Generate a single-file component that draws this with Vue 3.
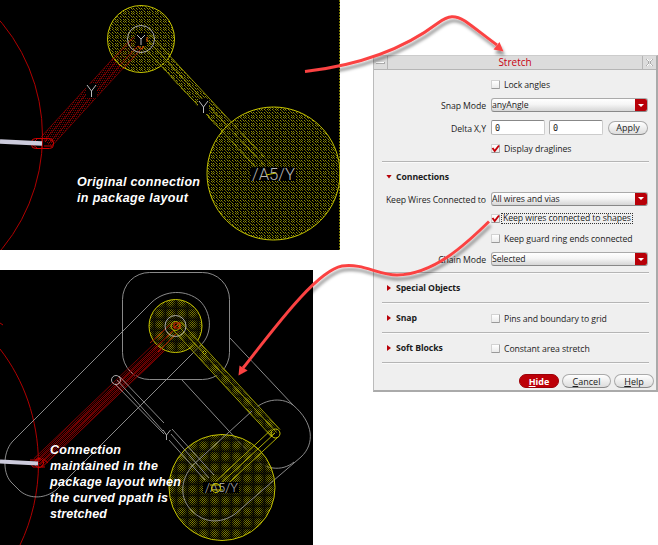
<script setup>
const sections = [
  { title: 'Special Objects', option: '' },
  { title: 'Snap', option: 'Pins and boundary to grid' },
  { title: 'Soft Blocks', option: 'Constant area stretch' },
]
</script>

<template>
  <main class="page">
    <div class="figures">
      <svg class="figure" width="340" height="250" viewBox="0 0 340 250">
        <defs>
          <pattern id="dotY" width="8" height="8" patternUnits="userSpaceOnUse">
            <path d="M0 0h1v1h-1zM3 0h1v1h-1zM5 0h1v1h-1zM0 3h1v1h-1zM3 3h1v1h-1zM5 3h1v1h-1zM0 5h1v1h-1zM3 5h1v1h-1zM5 5h1v1h-1z" fill="#8f8d00" />
            <path d="M1 1h1v1h-1zM4 1h1v1h-1zM6 1h1v1h-1zM1 4h1v1h-1zM4 4h1v1h-1zM6 4h1v1h-1zM1 6h1v1h-1zM4 6h1v1h-1zM6 6h1v1h-1zM7 2h1v1h-1zM2 7h1v1h-1z" fill="#625f00" />
          </pattern>
          <pattern id="dotR" width="4" height="4" patternUnits="userSpaceOnUse">
            <path d="M0 0h1v1h-1zM2 0h1v1h-1zM1 2h1v1h-1zM3 2h1v1h-1z" fill="#780000" />
          </pattern>
        </defs>
        <rect width="340" height="250" fill="#000" />
        <path d="M339.500 0V250" stroke="#777600" stroke-dasharray="2 1" />
        <circle cx="-135" cy="136" r="177.500" fill="none" stroke="#b00000" />
        <path d="M41 137L131 39L141 48L51 147Z" fill="url(#dotR)" />
        <g transform="translate(46 142) rotate(-47.500)">
          <path d="M0 -7H134M0 7H134M0 -2.500H134M0 3H134" stroke="#a90000" stroke-width=".6" fill="none" />
        </g>
        <circle cx="141" cy="39" r="33.500" fill="#000" fill-opacity=".6" />
        <circle cx="141" cy="39" r="33.500" fill="url(#dotY)" stroke="#c5c300" />
        <path d="M112 60L134 37M119 66L140 44M123 69L143 47" stroke="#ae1600" stroke-width=".8" />
        <path d="M151 35L273 168L263 177L141 45Z" fill="url(#dotY)" />
        <g transform="translate(146 40) rotate(47)">
          <path d="M-1 -6.500H178M0 -1H181M0 6.500H172" stroke="#a9a700" stroke-width=".8" fill="none" />
        </g>
        <circle cx="273.500" cy="173.500" r="66.500" fill="url(#dotY)" stroke="#c5c300" />
        <circle cx="141" cy="39" r="13.500" fill="none" stroke="#aaa" />
        <rect x="136" y="33" width="10" height="13" fill="#000" />
        <path d="M137 35l4 4 4-4M141 39v6" stroke="#bbb" fill="none" />
        <path d="M147 37v5M138 46l4 3 2-3" stroke="#e34b00" fill="none" />
        <rect x="86" y="84" width="11" height="14" fill="#000" />
        <path d="M87 85l4.500 6 4.500-6M91.500 91v6" stroke="#bbb" fill="none" />
        <rect x="198" y="99" width="11" height="15" fill="#000" />
        <path d="M199 101l4.500 6 4.500-6M203.500 107v6" stroke="#bbb" fill="none" />
        <rect x="251" y="167" width="45" height="14" fill="#000" />
        <text x="252" y="179.500" class="tag" textLength="43" lengthAdjust="spacingAndGlyphs">/A5/Y</text>
        <path d="M266 175l10-2" stroke="#c7c300" />
        <rect x="31.500" y="138.500" width="22" height="10" rx="4" fill="none" stroke="#d00000" />
        <path d="M37 139l-5 5 5 4M42 148V139M45 142l3-4 5 4M44 146h8" stroke="#c00000" fill="none" />
        <path d="M0 141.500L42 143.500" stroke="#cccbdc" stroke-width="4.500" />
        <text class="caption" x="77" y="186" textLength="123">Original connection</text>
        <text class="caption" x="77" y="202" textLength="111">in package layout</text>
      </svg>

      <svg class="figure" width="313" height="275" viewBox="0 270 313 275">
        <defs>
          <pattern id="finY" width="2" height="2" patternUnits="userSpaceOnUse">
            <path d="M0 0h1v1h-1zM1 1h1v1h-1z" fill="#8b8900" />
          </pattern>
          <radialGradient id="cell">
            <stop offset="0" stop-color="#000" stop-opacity="0" />
            <stop offset=".45" stop-color="#000" stop-opacity=".15" />
            <stop offset="1" stop-color="#000" stop-opacity=".68" />
          </radialGradient>
          <pattern id="shadeY" width="11" height="11" patternUnits="userSpaceOnUse">
            <rect width="11" height="11" fill="url(#cell)" />
            <path d="M0 .5H11M.5 0V11" stroke="#000" stroke-opacity=".4" />
          </pattern>
          <pattern id="finR" width="2" height="2" patternUnits="userSpaceOnUse">
            <path d="M0 0h1v1h-1zM1 1h1v1h-1z" fill="#700000" />
          </pattern>
        </defs>
        <rect y="270" width="313" height="275" fill="#000" />
        <path d="M0 323l3 2M0 349C24 380 38 419 38.500 463C38.500 492 32 520 20 545" fill="none" stroke="#b00000" />
        <g fill="none" stroke="#999" stroke-width=".9">
          <rect x="122.500" y="272.500" width="107" height="107" rx="27" />
          <path d="M152 302L14 440C3 450 2 472 11 482L20 491C31 500 46 498 56 490L200 346C214 333 211 312 200 301C186 289 165 290 152 302Z" />
          <path d="M230 338L293 405C314 423 315 444 301 457L273 481M182 380L252 456C264 470 282 472 294 462M252 411C263 400 280 396 293 405" />
        </g>
        <path d="M34 459L168 333L176 341L42 467Z" fill="url(#finR)" />
        <g transform="translate(38 463) rotate(-43.700)">
          <path d="M0 -6H184M0 6H184M0 -2H193M0 2H193" stroke="#a00000" fill="none" stroke-width=".7" />
        </g>
        <circle cx="175.500" cy="326" r="26.500" fill="url(#finY)" />
        <circle cx="175.500" cy="326" r="26.500" fill="url(#shadeY)" stroke="#c5c300" />
        <path d="M150 343L172 323M154 349L177 327M158 352L179 331" stroke="#9d1300" />
        <circle cx="222" cy="487.500" r="53" fill="url(#finY)" />
        <circle cx="222" cy="487.500" r="53" fill="url(#shadeY)" stroke="#c5c300" />
        <path d="M181 322L279 429L271 437L173 330Z" fill="url(#finY)" />
        <path d="M181 322L279 429L271 437L173 330Z" fill="url(#shadeY)" />
        <g transform="translate(177 326) rotate(47.300)">
          <path d="M0 -5.500H146M0 5.500H146M0 -1H146" stroke="#aaa900" fill="none" stroke-width=".8" />
        </g>
        <g transform="translate(275 433) rotate(137)">
          <path d="M0 -5H76M0 0H76M0 5H76" stroke="#b5b300" fill="none" stroke-width=".9" />
        </g>
        <circle cx="275.500" cy="433.500" r="4.500" fill="none" stroke="#c8c600" />
        <path d="M202.500 352.500l2-2 2 2-2 2z" fill="none" stroke="#c8c600" />
        <g fill="none" stroke="#999" stroke-width=".9">
          <path d="M119 376L164 423M115 384L164 434M117 380L163 431M172 429L214 475M169 440L205 480M171 434L209 478" />
          <circle cx="116" cy="380" r="4.500" stroke="#bbb" />
          <path d="M163 430l3.500 5 4-5M166.500 435v5" stroke="#bbb" />
          <path d="M193 465L252 411M193 465C180 480 179 498 192 511C203 522 219 525 235 514L273 481" />
          <circle cx="175.500" cy="326" r="10.500" stroke="#bbb" />
        </g>
        <circle cx="175.500" cy="326" r="4.500" fill="none" stroke="#b8b600" />
        <path d="M174 323h6v5h-6zM174 328l4-4" fill="none" stroke="#d01d00" />
        <rect x="203" y="482" width="36" height="11" fill="#000" />
        <text x="205" y="492" class="tag small" textLength="33" lengthAdjust="spacingAndGlyphs">/A5/Y</text>
        <circle cx="216" cy="488" r="4.500" fill="none" stroke="#c8c600" />
        <path d="M210 485h11M211 490h12" stroke="#b8b600" />
        <circle cx="39" cy="463" r="4.500" fill="none" stroke="#d00000" />
        <path d="M30 460h11M33 467h12M30 463l3 4M42 458l6 5" stroke="#c00000" fill="none" />
        <path d="M0 461.500L38 463.500" stroke="#cccbdc" stroke-width="3.800" />
        <text class="caption" x="50" y="454" textLength="71">Connection</text>
        <text class="caption" x="50" y="470" textLength="108">maintained in the</text>
        <text class="caption" x="50" y="486" textLength="131">package layout when</text>
        <text class="caption" x="50" y="502" textLength="118">the curved ppath is</text>
        <text class="caption" x="50" y="518" textLength="57">stretched</text>
      </svg>
    </div>

    <section class="dialog">
      <header class="titlebar">
        <span class="tb-btn"><i class="dash"></i></span>
        <span class="tb-title">Stretch</span>
        <span class="tb-btn right">
          <svg width="9" height="9" viewBox="0 0 9 9"><path d="M1 1l2.500 2v3L1 8M8 1L5.500 3v3L8 8" fill="none" stroke="#aaa" /><path d="M2 1l2 2M7 1L5 3M2 8l2-2M7 8L5 6" stroke="#fff" /></svg>
        </span>
      </header>

      <div class="body">
        <div class="row r-lock"><span class="label"></span><i class="check"></i><span class="opt">Lock angles</span></div>
        <div class="row r-snap"><span class="label">Snap Mode</span><div class="combo"><span>anyAngle</span><b></b></div></div>
        <div class="row r-delta">
          <span class="label">Delta X,Y</span>
          <span class="input">0</span><span class="input">0</span>
          <button class="btn apply">Apply</button>
        </div>
        <div class="row r-drag">
          <span class="label"></span>
          <i class="check"><svg width="9" height="9" viewBox="0 0 9 9"><path d="M1.500 4l2.200 3L8 1.500" fill="none" stroke="#c60008" stroke-width="1.900" /></svg></i>
          <span class="opt">Display draglines</span>
        </div>
        <div class="sep first"></div>
        <div class="row r-conn"><i class="tri down"></i><span class="head">Connections</span></div>
        <div class="row r-keep"><span class="label">Keep Wires Connected to</span><div class="combo"><span>All wires and vias</span><b></b></div></div>
        <div class="row r-shapes">
          <span class="label"></span>
          <i class="check"><svg width="9" height="9" viewBox="0 0 9 9"><path d="M1.500 4l2.200 3L8 1.500" fill="none" stroke="#c60008" stroke-width="1.900" /></svg></i>
          <span class="opt focus">Keep wires connected to shapes</span>
        </div>
        <div class="row r-guard"><span class="label"></span><i class="check"></i><span class="opt">Keep guard ring ends connected</span></div>
        <div class="row r-chain"><span class="label">Chain Mode</span><div class="combo"><span>Selected</span><b></b></div></div>
        <div class="sep"></div>
        <template v-for="s in sections" :key="s.title">
          <div class="row r-sec">
            <div class="sec-title"><i class="tri"></i><span class="head">{{ s.title }}</span></div>
            <template v-if="s.option"><i class="check"></i><span class="opt">{{ s.option }}</span></template>
          </div>
          <div class="sep"></div>
        </template>
        <footer class="footer">
          <button class="btn hide"><u>H</u>ide</button>
          <button class="btn cancel"><u>C</u>ancel</button>
          <button class="btn help"><u>H</u>elp</button>
        </footer>
      </div>
    </section>

    <svg class="arrows" width="658" height="545" viewBox="0 0 658 545">
      <defs>
        <filter id="drop" x="-10%" y="-10%" width="120%" height="130%">
          <feDropShadow dx="1.500" dy="4" stdDeviation="1.500" flood-color="#000" flood-opacity=".4" />
        </filter>
      </defs>
      <g filter="url(#drop)" fill="none" stroke="#fb4343" stroke-width="2.900">
        <path d="M305 71.500C353 66 401 51 438 23C449 15 455 15 465 21C475 28 486 37 497 45" />
        <path d="M503.500 51.500L493.500 49.500L499.500 42Z" fill="#fb4343" stroke="none" />
      </g>
      <g filter="url(#drop)" fill="none" stroke="#fb4343" stroke-width="2.900">
        <path d="M489 221.500C465 245 434 274 397 275C378 275 363 263 342 266C316 271 273 330 243 368" />
        <path d="M238.500 375.500L239.500 365.500L247.500 370.500Z" fill="#fb4343" stroke="none" />
      </g>
    </svg>
  </main>
</template>

<style>
body { margin: 0; background: #fff; overflow: hidden; }
</style>

<style scoped>
.page { position: relative; display: flex; width: 658px; height: 545px; background: #fff; font-family: "Open Sans", "Noto Sans", sans-serif; color: #1c1c1c; }
.figures { display: flex; flex-direction: column; gap: 20px; width: 373px; flex: none; }
.figure { display: block; }
.caption { font: italic bold 12.500px "Liberation Sans", Arial, sans-serif; fill: #fff; }
.tag { font: 300 16px "Roboto", "Noto Sans", sans-serif; fill: #b8b8b8; }
.tag.small { font-size: 12px; }
.dialog { box-sizing: border-box; width: 285px; height: 337px; margin-top: 55px; flex: none; background: #efefef; border: solid #aaa; border-width: 1px 2px 2px 1px; border-top-color: #ccc; border-left-color: #bbb; }
.titlebar { display: flex; align-items: stretch; height: 13px; background: #dcdcdc; border-bottom: 1px solid #b5b5b5; }
.tb-btn { display: flex; align-items: center; justify-content: center; width: 13px; border-right: 1px solid #b5b5b5; }
.tb-btn.right { border-right: 0; border-left: 1px solid #b5b5b5; }
.dash { width: 8px; height: 1px; background: #fff; border: solid #aaa; border-width: 0 1px 1px 0; }
.tb-title { flex: 1; text-align: center; font-size: 10px; line-height: 13px; color: #c80010; letter-spacing: 0; }
.body { padding: 4px 7px 0 8px; font-size: 8.700px; letter-spacing: -.08px; }
.row { display: flex; align-items: center; white-space: nowrap; }
.r-lock { height: 20px; }
.r-snap { height: 22px; }
.r-delta { height: 23px; }
.r-drag { height: 18px; }
.r-conn { height: 27px; }
.r-keep { height: 17px; }
.r-shapes { height: 23px; }
.r-guard { height: 16px; }
.r-chain { height: 26px; }
.r-sec { height: 28px; }
.label { width: 104px; margin-right: 5px; text-align: right; padding-top: 2px; flex: none; }
.combo { display: flex; box-sizing: border-box; width: 157px; height: 14px; border: 1px solid #aaa; border-bottom-color: #888; border-radius: 3px; background: linear-gradient(#fff, #f5f5f5 45%, #d6d6d6); line-height: 12px; overflow: hidden; }
.combo span { flex: 1; }
.combo b { display: flex; align-items: center; justify-content: center; width: 12px; background: #b80008; }
.combo b::after { content: ""; border: solid transparent; border-width: 3px 3px 0; border-top-color: #fff; }
.check { display: flex; box-sizing: border-box; width: 9px; height: 9px; flex: none; border: 1px solid #d2d2d2; border-right-color: #aaa; border-bottom-color: #999; border-radius: 1px; background: linear-gradient(#fff, #eaeaea); }
.check svg { flex: none; margin: -1px; }
.opt { margin-left: 4px; padding-top: 1px; }
.focus { margin-left: 1px; padding: 0 1px; border: 1px dotted #333; line-height: 9px; }
.input { box-sizing: border-box; width: 54px; height: 15px; margin-right: 4px; padding-left: 3px; border: 1px solid #ccc; border-top-color: #888; border-left-color: #aaa; border-radius: 2px; background: #fff; font: 8.500px/14px "DejaVu Sans Mono", monospace; }
.btn { box-sizing: border-box; height: 14px; padding: 0; border: 1px solid #aaa; border-bottom-color: #888; border-radius: 7px; background: linear-gradient(#fff, #ddd); font: 9px/11px "Open Sans", sans-serif; letter-spacing: 0; color: #1c1c1c; }
.apply { width: 40px; margin-left: 1px; }
.sep { height: 1px; background: #b5b5b5; border-bottom: 1px solid #fafafa; }
.sep.first { margin-top: 4px; }
.head { font-weight: 700; }
.tri { box-sizing: border-box; flex: none; width: 4px; height: 6px; margin: 0 5px; background: #b80008; clip-path: polygon(0 0, 100% 50%, 0 100%); }
.tri.down { width: 6px; height: 4px; margin: 0 4px; clip-path: polygon(0 0, 100% 0, 50% 100%); }
.sec-title { display: flex; align-items: center; width: 109px; flex: none; }
.footer { display: flex; justify-content: flex-end; gap: 3px; padding-top: 10px; margin-right: -5px; }
.btn.hide { width: 40px; background: #bd0008; border-color: #9d0008; color: #fff; font-weight: 700; }
.cancel { width: 49px; }
.help { width: 40px; }
.btn u { text-underline-offset: 1px; }
.arrows { position: absolute; inset: 0; }
</style>
